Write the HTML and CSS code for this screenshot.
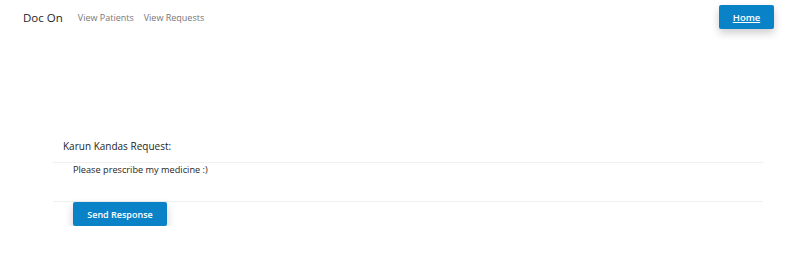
FILE: index.html
```html
<!DOCTYPE html>
<html>
<head>
  <meta charset="utf-8">
  <title>Doc On</title>
  <link rel="stylesheet" href="styles.css">
</head>
<body>
  <nav class="navbar">
    <a href="" class="brand">Doc On</a>
    <a href="" class="nav-link">View Patients</a>
    <a href="" class="nav-link">View Requests</a>
    <a href="" class="btn btn-home">Home</a>
  </nav>
  <main class="request">
    <div class="request-title">Karun Kandas Request:</div>
    <div class="request-body">Please prescribe my medicine :)</div>
    <button class="btn btn-send">Send Response</button>
  </main>
</body>
</html>
```
FILE: styles.css
```css
/* basic style */
body {
  margin: 0;
  font-family: "Open Sans", "Noto Sans", sans-serif;
  background: #fff;
  color: #1e1e1e;
}

a {
  text-decoration: none;
}

/* navbar */
.navbar {
  display: flex;
  align-items: center;
  height: 34px;
  padding: 0 32px 0 23px;
}

.brand {
  font-size: 11.5px;
  color: #1e1e1e;
  margin-right: 15px;
}

.nav-link {
  font-size: 9px;
  color: #777;
  margin-right: 10px;
}

/* buttons */
.btn {
  background: #0a82c8;
  color: #fff;
  border: 0;
  border-radius: 2px;
  font-family: inherit;
  font-weight: 600;
  font-size: 9.5px;
  box-shadow: 0 4px 8px rgba(0, 0, 0, 0.2);
  display: flex;
  align-items: center;
  justify-content: center;
  padding: 0;
}

.btn-home {
  margin-left: auto;
  width: 55px;
  height: 24px;
  text-decoration: underline;
}

/* request */
.request {
  margin: 105px 43px 0 53px;
}

.request-title {
  font-size: 10px;
  line-height: 14px;
  padding: 0 0 9px 10px;
}

.request-body {
  font-size: 9.2px;
  line-height: 14px;
  border-top: 1px solid #f0f0f0;
  border-bottom: 1px solid #f0f0f0;
  padding: 0 20px 24px;
}

.btn-send {
  width: 94px;
  height: 24px;
  margin: 0 0 0 20px;
  font-size: 9px;
}
```
